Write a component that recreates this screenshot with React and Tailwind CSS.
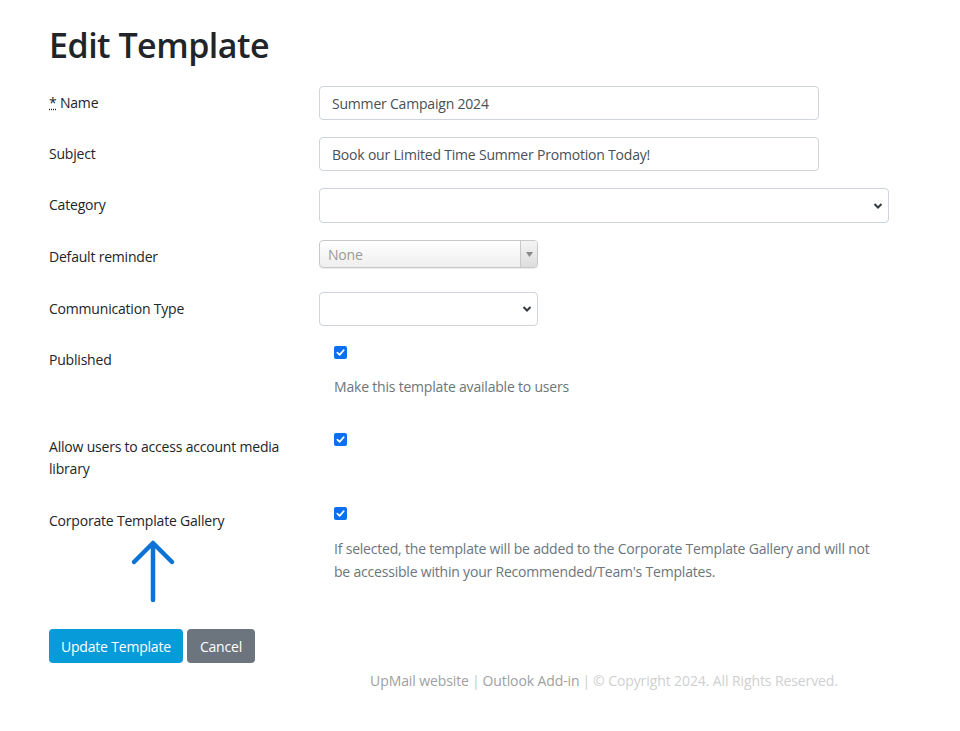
import React from "react";

const font = { fontFamily: '"Open Sans", "Noto Sans", sans-serif' };

function Check() {
  return (
    <span className="flex h-[13px] w-[13px] items-center justify-center rounded-[2px] bg-[#0b6ff0]">
      <svg width="9" height="9" viewBox="0 0 10 10">
        <path d="M1.5 5.2 L4 7.6 L8.6 2.4" fill="none" stroke="white" strokeWidth="1.8" strokeLinecap="round" strokeLinejoin="round" />
      </svg>
    </span>
  );
}

function Chevron() {
  return (
    <svg width="10" height="8" viewBox="0 0 10 8" className="absolute right-[5px] top-1/2 -translate-y-1/2">
      <path d="M1.5 2 L5 5.5 L8.5 2" fill="none" stroke="#343a40" strokeWidth="2" />
    </svg>
  );
}

function Label({ children }) {
  return (
    <div className="w-[270px] shrink-0 pt-[6px] pr-4 text-[14px] leading-[21px] text-[#212529]">
      {children}
    </div>
  );
}

export default function App() {
  return (
    <div className="min-h-[731px] bg-white pl-[49px] tracking-[-0.2px] text-[#212529]" style={font}>
      <h1 className="pt-[23px] text-[34px] font-semibold leading-[44px] tracking-[-0.5px] text-[#212529]">Edit Template</h1>

      <div className="mt-[19px] flex flex-col gap-[17px]">
        <div className="flex">
          <Label>
            <abbr className="underline decoration-dotted" title="required">*</abbr> Name
          </Label>
          <div className="flex h-[34px] w-[500px] items-center rounded-[4px] border border-[#ced4da] px-[12px] text-[14px] text-[#495057]">
            Summer Campaign 2024
          </div>
        </div>

        <div className="flex">
          <Label>Subject</Label>
          <div className="flex h-[34px] w-[500px] items-center rounded-[4px] border border-[#ced4da] px-[12px] text-[14px] text-[#495057]">
            Book our Limited Time Summer Promotion Today!
          </div>
        </div>

        <div className="flex">
          <Label>Category</Label>
          <div className="relative h-[35px] w-[570px] rounded-[4px] border border-[#ced4da]">
            <Chevron />
          </div>
        </div>

        <div className="flex h-[35px]">
          <Label>Default reminder</Label>
          <div className="flex h-[28px] w-[219px] overflow-hidden rounded-[4px] border border-[#c8c8c8] bg-gradient-to-b from-white to-[#eeeeee] shadow-[0_1px_1px_rgba(0,0,0,0.08)]">
            <div className="flex flex-1 items-center px-[8px] text-[14px] text-[#9a9a9a]">None</div>
            <div className="flex w-[17px] items-center justify-center border-l border-[#c8c8c8] bg-gradient-to-b from-[#f4f4f4] to-[#dddddd]">
              <svg width="7" height="5" viewBox="0 0 7 5"><path d="M0 0 H7 L3.5 5 Z" fill="#888" /></svg>
            </div>
          </div>
        </div>

        <div className="flex">
          <Label>Communication Type</Label>
          <div className="relative h-[34px] w-[219px] rounded-[4px] border border-[#ced4da]">
            <Chevron />
          </div>
        </div>

        <div className="flex h-[70px]">
          <Label>Published</Label>
          <div className="flex w-[570px] flex-col px-[15px]">
            <div className="pt-[3px]"><Check /></div>
            <p className="mt-[17px] text-[14px] leading-[21px] text-[#6c757d]">Make this template available to users</p>
          </div>
        </div>

        <div className="flex h-[57px]">
          <div className="w-[270px] shrink-0 pt-[6px] pr-4 text-[14px] leading-[22px] text-[#212529]">
            Allow users to access account media
            <br />
            library
          </div>
          <div className="flex w-[570px] flex-col px-[15px]">
            <div className="pt-[3px]"><Check /></div>
          </div>
        </div>

        <div className="flex">
          <div className="relative">
            <Label>Corporate Template Gallery</Label>
            <svg className="absolute left-[79px] top-[34px]" width="50" height="66" viewBox="0 0 50 66">
              <path d="M25 5 V62 M6 24 L25 5 L44 24" fill="none" stroke="#0b72d6" strokeWidth="4.5" strokeLinecap="round" strokeLinejoin="round" />
            </svg>
          </div>
          <div className="flex w-[570px] flex-col px-[15px]">
            <div className="pt-[3px]"><Check /></div>
            <p className="mt-[17px] text-[14px] leading-[23px] text-[#6c757d]">
              If selected, the template will be added to the Corporate Template Gallery and will not be accessible within your Recommended/Team's Templates.
            </p>
          </div>
        </div>
      </div>

      <div className="mt-[46px] flex gap-[4px]">
        <button className="h-[34px] rounded-[4px] bg-[#079cd9] px-[12px] text-[14px] text-white">Update Template</button>
        <button className="h-[34px] rounded-[4px] bg-[#6c757d] px-[13px] text-[14px] text-white">Cancel</button>
      </div>

      <div className="ml-[270px] mt-[7px] flex w-[570px] justify-center text-[14px] leading-[22px] tracking-[-0.1px]">
        <span className="text-[#a0a0a0]">UpMail website</span>
        <span className="px-[3px] text-[#c8c8c8]">|</span>
        <span className="text-[#a0a0a0]">Outlook Add-in</span>
        <span className="px-[3px] text-[#d0d0d0]">|</span>
        <span className="text-[#d0d0d0]">© Copyright 2024. All Rights Reserved.</span>
      </div>
    </div>
  );
}
